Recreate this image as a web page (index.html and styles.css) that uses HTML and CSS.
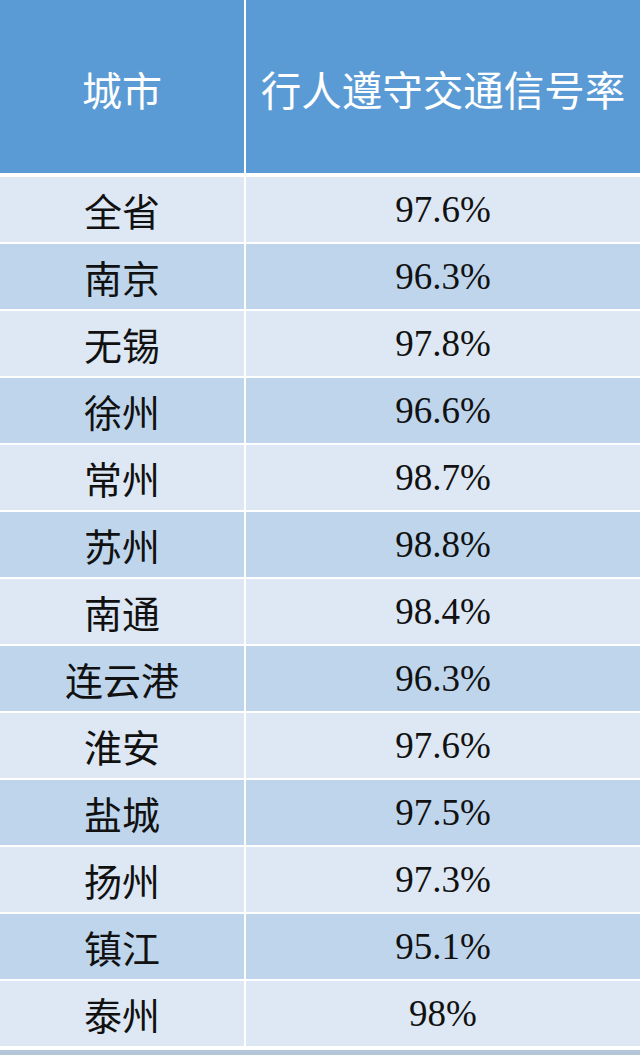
FILE: index.html
```html
<!DOCTYPE html>
<html lang="zh-CN">
<head>
<meta charset="utf-8">
<title>行人遵守交通信号率</title>
<link rel="stylesheet" href="styles.css">
</head>
<body>
<table class="rate-table">
  <thead>
    <tr>
      <th class="col-city">城市</th>
      <th class="col-rate">行人遵守交通信号率</th>
    </tr>
  </thead>
  <tbody>
    <tr><td class="city">全省</td><td class="rate">97.6%</td></tr>
    <tr><td class="city">南京</td><td class="rate">96.3%</td></tr>
    <tr><td class="city">无锡</td><td class="rate">97.8%</td></tr>
    <tr><td class="city">徐州</td><td class="rate">96.6%</td></tr>
    <tr><td class="city">常州</td><td class="rate">98.7%</td></tr>
    <tr><td class="city">苏州</td><td class="rate">98.8%</td></tr>
    <tr><td class="city">南通</td><td class="rate">98.4%</td></tr>
    <tr><td class="city">连云港</td><td class="rate">96.3%</td></tr>
    <tr><td class="city">淮安</td><td class="rate">97.6%</td></tr>
    <tr><td class="city">盐城</td><td class="rate">97.5%</td></tr>
    <tr><td class="city">扬州</td><td class="rate">97.3%</td></tr>
    <tr><td class="city">镇江</td><td class="rate">95.1%</td></tr>
    <tr><td class="city">泰州</td><td class="rate">98%</td></tr>
  </tbody>
</table>
</body>
</html>
```
FILE: styles.css
```css
html, body {
  margin: 0;
  padding: 0;
  background: #b3c6da;
}

body {
  width: 640px;
  height: 1055px;
  overflow: hidden;
}

.rate-table {
  width: 640px;
  border-collapse: separate;
  border-spacing: 0;
  table-layout: fixed;
  font-family: "Liberation Serif", "Noto Sans CJK SC", serif;
}

.rate-table th,
.rate-table td {
  padding: 0;
  text-align: center;
  vertical-align: middle;
  border-bottom: 2px solid #ffffff;
}

.rate-table th:first-child,
.rate-table td:first-child {
  box-sizing: border-box;
  width: 246px;
  border-right: 2px solid #ffffff;
}

.rate-table th {
  height: 177px;
  box-sizing: border-box;
  padding-top: 4px;
  background: #5b9bd5;
  color: #ffffff;
  font-family: "Noto Sans CJK SC", sans-serif;
  font-weight: 400;
  font-size: 40px;
  line-height: 48px;
  border-bottom-width: 4px;
}

.rate-table th.col-rate {
  font-size: 40.5px;
}

.rate-table td {
  height: 65px;
  color: #111111;
  background: #dde8f4;
  line-height: 44px;
}

.rate-table tbody tr:nth-child(even) td {
  background: #bed5ec;
}

.rate-table tbody tr:last-child td {
  border-bottom-width: 4px;
}

.city {
  font-family: "Noto Sans CJK SC", sans-serif;
  font-size: 38px;
  padding-top: 6px;
}

.rate {
  font-family: "Liberation Serif", serif;
  font-size: 37px;
  padding-top: 4px;
}
```
